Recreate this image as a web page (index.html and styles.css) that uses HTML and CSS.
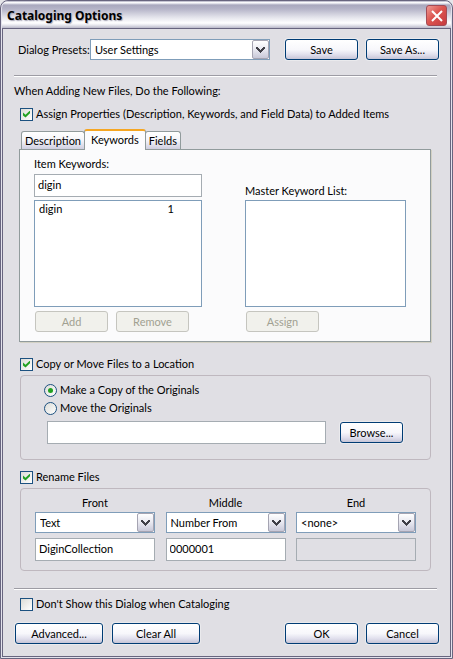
FILE: index.html
```html
<!DOCTYPE html>
<html lang="en">
<head>
<meta charset="utf-8">
<title>Cataloging Options</title>
<link rel="stylesheet" href="styles.css">
</head>
<body>
<form class="window">
  <header class="titlebar">
    <h1>Cataloging Options</h1>
    <button type="button" class="close" aria-label="Close">
      <svg viewBox="0 0 12 12" width="12" height="12"><path d="M1 1L11 11M11 1L1 11" stroke="#fff" stroke-width="2"/></svg>
    </button>
  </header>
  <main class="client">
    <div class="presets">
      <label for="preset">Dialog Presets:</label>
      <span class="combo">
        <select id="preset"><option>User Settings</option></select>
        <span class="arrow"><svg viewBox="0 0 9 6" width="9" height="6"><path d="M0 0h2v1h1v1h1v1h1v-1h1v-1h1v-1h2v2h-1v1h-1v1h-1v1h-1v1h-1v-1h-1v-1h-1v-1h-1v-1h-1z"/></svg></span>
      </span>
      <button type="button" class="btn save">Save</button>
      <button type="button" class="btn">Save As...</button>
    </div>
    <hr>
    <p class="intro">When Adding New Files, Do the Following:</p>
    <label class="check"><input type="checkbox" checked>Assign Properties (Description, Keywords, and Field Data) to Added Items</label>

    <div class="tabs" role="tablist">
      <button type="button" class="tab" role="tab">Description</button>
      <button type="button" class="tab active" role="tab" aria-selected="true">Keywords</button>
      <button type="button" class="tab" role="tab">Fields</button>
    </div>
    <section class="panel">
      <div class="item-column">
        <label for="keyword">Item Keywords:</label>
        <input id="keyword" class="field" type="text" value="digin">
        <div class="list"><div class="list-row"><span>digin</span><span>1</span></div></div>
        <div class="actions">
          <button type="button" class="btn" disabled>Add</button>
          <button type="button" class="btn" disabled>Remove</button>
        </div>
      </div>
      <div class="master-column">
        <span>Master Keyword List:</span>
        <div class="list"></div>
        <div class="actions"><button type="button" class="btn" disabled>Assign</button></div>
      </div>
    </section>

    <label class="check section-check"><input type="checkbox" checked>Copy or Move Files to a Location</label>
    <section class="group copy">
      <label class="check radio"><input type="radio" name="mode" checked>Make a Copy of the Originals</label>
      <label class="check radio"><input type="radio" name="mode">Move the Originals</label>
      <div class="location">
        <input class="field" type="text" aria-label="Location">
        <button type="button" class="btn browse">Browse...</button>
      </div>
    </section>

    <label class="check rename-check"><input type="checkbox" checked>Rename Files</label>
    <section class="group rename">
      <div class="part">
        <label for="front">Front</label>
        <span class="combo">
          <select id="front"><option>Text</option></select>
          <span class="arrow"><svg viewBox="0 0 9 6" width="9" height="6"><path d="M0 0h2v1h1v1h1v1h1v-1h1v-1h1v-1h2v2h-1v1h-1v1h-1v1h-1v1h-1v-1h-1v-1h-1v-1h-1v-1h-1z"/></svg></span>
        </span>
        <input class="field" type="text" value="DiginCollection" aria-label="Front text">
      </div>
      <div class="part">
        <label for="middle">Middle</label>
        <span class="combo">
          <select id="middle"><option>Number From</option></select>
          <span class="arrow"><svg viewBox="0 0 9 6" width="9" height="6"><path d="M0 0h2v1h1v1h1v1h1v-1h1v-1h1v-1h2v2h-1v1h-1v1h-1v1h-1v1h-1v-1h-1v-1h-1v-1h-1v-1h-1z"/></svg></span>
        </span>
        <input class="field" type="text" value="0000001" aria-label="Middle number">
      </div>
      <div class="part">
        <label for="end">End</label>
        <span class="combo">
          <select id="end"><option>&lt;none&gt;</option></select>
          <span class="arrow"><svg viewBox="0 0 9 6" width="9" height="6"><path d="M0 0h2v1h1v1h1v1h1v-1h1v-1h1v-1h2v2h-1v1h-1v1h-1v1h-1v1h-1v-1h-1v-1h-1v-1h-1v-1h-1z"/></svg></span>
        </span>
        <input class="field" type="text" disabled aria-label="End text">
      </div>
    </section>

    <hr>
    <label class="check dismiss"><input type="checkbox">Don't Show this Dialog when Cataloging</label>
    <footer class="buttons">
      <button type="button" class="btn wide">Advanced...</button>
      <button type="button" class="btn wide">Clear All</button>
      <button type="submit" class="btn ok">OK</button>
      <button type="button" class="btn">Cancel</button>
    </footer>
  </main>
</form>
</body>
</html>
```
FILE: styles.css
```css
* { box-sizing: border-box; }

body {
  margin: 0;
  background: #e6e6ea;
  color: #000;
  font: 11px/14px Lato, "Liberation Sans", sans-serif;
}

button, input, select { font: inherit; color: inherit; margin: 0; }

.window {
  display: flex;
  flex-direction: column;
  min-height: 100vh;
  padding: 0 1px 1px;
  border: 1px solid #68657f;
  border-radius: 8px 8px 0 0;
  background: #e3e2ec;
}

.titlebar {
  display: flex;
  align-items: center;
  justify-content: space-between;
  height: 27px;
  padding: 2px 4px 0 5px;
  border-radius: 7px 7px 0 0;
  background: linear-gradient(#8b89a5 0, #fff 1px, #f4f4f8 2px, #a9a8be 4px, #b5b4c8 8px, #e2e2ea 16px, #fff 22px, #e8e8ee 24px, #b9b8c9 27px);
}

.titlebar h1 {
  margin: 0;
  font: bold 12px/18px "Noto Sans", sans-serif;
  text-shadow: 1px 1px 1px #aaa9b8;
}

.close {
  display: grid;
  place-items: center;
  width: 21px;
  height: 21px;
  padding: 0;
  border: 1px solid #a34b55;
  border-radius: 3px;
  background: linear-gradient(135deg, #ee9a94, #dc5550 45%, #c63a3f);
}

.client {
  flex: 1;
  padding: 10px 11px 12px;
  border: 1px solid #68657f;
  background: #e0dfe4;
}

.presets { display: flex; align-items: center; padding-left: 4px; }
.presets label { width: 72px; white-space: nowrap; }
.presets .combo { flex: 1; }
.save { margin: 0 8px 0 15px; }

.combo { position: relative; display: block; }

.combo select {
  appearance: none;
  display: block;
  width: 100%;
  height: 21px;
  padding: 0 20px 0 4px;
  border: 1px solid #7f9db9;
  border-radius: 0;
  background: #fff;
}

.arrow {
  position: absolute;
  top: 1px;
  right: 1px;
  display: grid;
  place-items: center;
  width: 17px;
  height: 19px;
  border: 1px solid #a5a4b2;
  border-radius: 2px;
  background: linear-gradient(#fff, #e8e8f0 50%, #c8c8d8);
  fill: #404048;
  pointer-events: none;
}

.btn {
  width: 73px;
  height: 21px;
  padding: 0;
  border: 1px solid #003c74;
  border-radius: 3px;
  background: linear-gradient(#fff, #f7f7fb 50%, #e2e1ee 75%, #c6c5d7);
  box-shadow: 0 0 0 1px #eaeaed;
}

.btn:disabled {
  border-color: #c5c5bf;
  background: #f1f1ec;
  box-shadow: none;
  color: #a1a192;
}

hr {
  height: 2px;
  margin: 15px 2px 7px 0;
  border: 0;
  border-top: 1px solid #9d9ca4;
  background: #fff;
}

.intro { margin: 0 0 9px; }

.check {
  display: flex;
  align-items: center;
  gap: 3px;
  height: 14px;
  padding-left: 6px;
}

.check input {
  appearance: none;
  display: grid;
  place-items: center;
  flex: none;
  width: 13px;
  height: 13px;
  border: 1px solid #1c5180;
  background: linear-gradient(135deg, #dcdcd7, #fff);
}

.check input[type="checkbox"]:checked::before {
  content: "";
  width: 7px;
  height: 7px;
  background: #21a121;
  clip-path: polygon(0 29%, 36% 60%, 100% 0, 100% 40%, 36% 100%, 0 70%);
}

.check input[type="radio"] { border-radius: 50%; }

.check input[type="radio"]:checked::before {
  content: "";
  width: 5px;
  height: 5px;
  border-radius: 50%;
  background: #21a121;
}

.tabs {
  display: flex;
  align-items: flex-end;
  margin-top: 8px;
  padding-left: 7px;
}

.tab {
  height: 18px;
  padding: 0 3px;
  border: 1px solid #919b9c;
  border-bottom: 0;
  border-radius: 3px 3px 0 0;
  background: linear-gradient(#fff, #f4f4f9 50%, #cfcee0);
}

.tab.active {
  z-index: 1;
  height: 21px;
  margin: 0 -1px -1px;
  padding: 0 6px 1px;
  border-top: 2px solid #f5a623;
  background: #fcfcfe;
}

.panel {
  display: flex;
  justify-content: space-between;
  margin: 0 8px 0 5px;
  padding: 7px 24px 9px 14px;
  border: 1px solid #919b9c;
  background: #fbfbfc;
  box-shadow: 1px 1px 0 0 #d3d1c4;
}

.item-column, .master-column {
  display: flex;
  flex-direction: column;
  flex: 0 1 168px;
}

.master-column { flex-basis: 161px; justify-content: flex-end; }

.field {
  width: 100%;
  height: 23px;
  padding: 0 3px 2px;
  border: 1px solid #a5acb2;
  background: #fff;
}

.field:disabled { background: #e0dfe4; }
.item-column .field { margin: 3px 0; }
.master-column > span { margin-bottom: 2px; }

.list {
  height: 107px;
  padding: 1px 27px 0 4px;
  border: 1px solid #7f9db9;
  background: #fff;
}

.list-row { display: flex; justify-content: space-between; }
.actions { display: flex; gap: 8px; padding: 4px 0 0 1px; }
.section-check { margin-top: 15px; }

.group {
  margin: 4px 8px 0 6px;
  border: 1px solid #bfb8bf;
  border-radius: 4px;
}

.copy { padding: 7px 27px 15px 23px; }
.radio { height: 18px; padding-left: 0; padding-bottom: 4px; }
.location { display: flex; align-items: center; gap: 14px; margin: 2px 0 0 3px; }
.location .field { flex: 1; }
.browse { width: 63px; }
.rename-check { margin-top: 10px; }

.rename {
  display: flex;
  justify-content: space-between;
  gap: 10px;
  padding: 7px 14px 9px;
}

.part { flex: 0 1 120px; min-width: 0; }
.part label { display: block; margin-bottom: 2px; text-align: center; }
.part .field { margin-top: 5px; display: block; }
.rename + hr { margin-top: 17px; }
.buttons { display: flex; gap: 9px; margin-top: 12px; padding-left: 1px; }
.buttons .btn:last-child { margin-left: -1px; }
.wide { width: 88px; }
.ok { margin-left: auto; }
```
